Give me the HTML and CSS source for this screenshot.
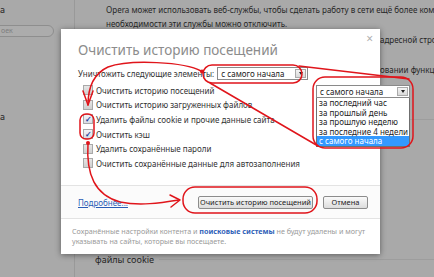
FILE: index.html
```html
<!DOCTYPE html>
<html>
	<head>
		<meta charset="utf-8">
		<link rel="stylesheet" href="styles.css">
		<title>Очистить историю посещений</title>
	</head>
	<body>
		<div class="screen">
			<div class="sidebar">
				<div class="side-top">а</div>
				<div class="search">оек</div>
				<div class="side-item">а</div>
			</div>
			<div class="content">
				<p class="line first">Opera может использовать веб-службы, чтобы сделать работу в сети ещё более комфортной.</p>
				<p class="line">необходимости эти службы можно отключить.</p>
				<p class="line behind">адресной строке</p>
				<p class="line behind second">овании функции</p>
				<div class="rule"></div>
				<div class="section-title"><span>файлы cookie</span><i></i></div>
			</div>
		</div>

		<div class="dialog">
			<div class="dlg-head">
				<span class="dlg-title">Очистить историю посещений</span>
				<span class="dlg-close">×</span>
			</div>
			<div class="dlg-body">
				<div class="range-row">
					<span>Уничтожить следующие элементы:</span>
					<div class="select wide">
						<span class="select-text">с самого начала</span>
						<span class="select-btn"><b></b></span>
					</div>
				</div>
				<ul class="checks">
					<li><span class="cb"></span>Очистить историю посещений</li>
					<li><span class="cb"></span>Очистить историю загруженных файлов</li>
					<li><span class="cb on">✓</span>Удалить файлы cookie и прочие данные сайта</li>
					<li><span class="cb on">✓</span>Очистить кэш</li>
					<li><span class="cb"></span>Удалить сохранённые пароли</li>
					<li><span class="cb"></span>Очистить сохранённые данные для автозаполнения</li>
				</ul>
			</div>
			<div class="dlg-foot">
				<a class="more" href="#">Подробнее...</a>
				<div class="buttons">
					<button class="btn main">Очистить историю посещений</button>
					<button class="btn cancel">Отмена</button>
				</div>
			</div>
			<div class="dlg-note">
				Сохранённые настройки контента и <b>поисковые системы</b> не будут удалены и могут<br>
				указывать на сайты, которые вы посещаете.
			</div>
		</div>

		<div class="popup">
			<div class="select">
				<span class="select-text">с самого начала</span>
				<span class="select-btn"><b></b></span>
			</div>
			<ul class="options">
				<li>за последний час</li>
				<li>за прошлый день</li>
				<li>за прошлую неделю</li>
				<li>за последние 4 недели</li>
				<li class="sel">с самого начала</li>
			</ul>
		</div>

		<!-- red marks drawn over the screenshot -->
		<svg class="marks" width="434" height="277" viewBox="0 0 434 277">
			<g fill="none" stroke="#e0151b" stroke-width="1.5" stroke-linecap="round" stroke-linejoin="round">
				<rect x="203" y="65" width="99" height="18" rx="9"/>
				<rect x="313" y="77" width="100" height="71" rx="12"/>
				<line x1="299" y1="66" x2="409" y2="79"/>
				<line x1="210" y1="83" x2="318" y2="146"/>
				<path d="M201,71 C185,62 130,59 108,67 C95,73 88,86 88,105"/>
				<path d="M83,91 L88,105 L93,91"/>
				<rect x="80" y="114" width="14" height="25" rx="6"/>
				<path d="M88,143 C86,175 95,195 120,202 C140,206 160,203 179,200"/>
				<path d="M170,195 L180,200 L171,207"/>
				<rect x="183" y="187" width="134" height="26" rx="12"/>
			</g>
			<g fill="#e0151b">
				<circle cx="202" cy="71.5" r="2"/>
				<circle cx="88" cy="143" r="2"/>
			</g>
		</svg>
	</body>
</html>
```

FILE: styles.css
```css
body {
	margin: 0;
	width: 434px;
	height: 277px;
	overflow: hidden;
	position: relative;
	background: #a9a9a9;
	font-family: "Noto Sans", sans-serif;
	color: #262626;
}
.screen {
	display: flex;
	height: 277px;
}
.sidebar {
	width: 74px;
	flex: none;
	border-right: 1px solid #999;
	font-size: 9px;
}
.side-top {
	padding-top: 4px;
	line-height: 12px;
}
.search {
	margin-left: -20px;
	margin-top: 9px;
	width: 52px;
	height: 10px;
	padding-left: 20px;
	border: 1px solid #8e8e8e;
	border-radius: 6px;
	background: #acacac;
	color: #7e7e7e;
	font-size: 7px;
	line-height: 10px;
}
.side-item {
	margin-top: 74px;
	line-height: 12px;
}
.content {
	flex: 1;
	min-width: 0;
	overflow: hidden;
	padding-left: 31px;
	font-size: 8px;
}
.line {
	margin: 0;
	line-height: 14px;
	white-space: nowrap;
}
.first {
	margin-top: 3px;
}
.behind {
	padding-left: 274px;
	margin-top: 2px;
}
.second {
	margin-top: 16px;
}
.rule {
	margin-top: 42px;
	margin-left: -31px;
	border-top: 1px solid #9d9d9d;
}
.section-title {
	display: flex;
	align-items: center;
	margin-top: 133px;
	margin-left: -11px;
	font-size: 9px;
}
.section-title i {
	flex: 1;
	margin-left: 5px;
	border-top: 1px solid #9d9d9d;
}

/* dialog */
.dialog {
	position: absolute;
	left: 61px;
	top: 29px;
	width: 319px;
	height: 225px;
	background: #fff;
	box-shadow: 0 1px 6px rgba(0, 0, 0, 0.45);
	font-size: 8px;
	color: #333;
}
.dlg-head {
	display: flex;
	justify-content: space-between;
	padding: 0 7px 0 17px;
	height: 36px;
}
.dlg-title {
	padding-top: 12px;
	font-size: 13.5px;
	color: #8c8c8c;
}
.dlg-close {
	padding-top: 1px;
	font-size: 12px;
	color: #b0b0b0;
}
.dlg-body {
	padding: 0 17px;
	height: 120px;
}
.range-row {
	display: flex;
	align-items: center;
	gap: 3px;
	height: 17px;
}
.select {
	display: flex;
	height: 11px;
	border: 1px solid #8a8a8a;
	background: #fff;
}
.wide {
	width: 89px;
}
.select-text {
	flex: 1;
	padding-left: 3px;
	line-height: 11px;
	color: #222;
}
.select-btn {
	width: 9px;
	margin: 1px;
	border: 1px solid #aaa;
	background: linear-gradient(#f4f4f4, #d8d8d8);
	display: flex;
	align-items: center;
	justify-content: center;
}
.select-btn b {
	border-left: 2.5px solid transparent;
	border-right: 2.5px solid transparent;
	border-top: 3px solid #222;
}
.checks {
	list-style: none;
	margin: 1px 0 0 5px;
	padding: 0;
}
.checks li {
	display: flex;
	align-items: center;
	height: 14.6px;
}
.cb {
	width: 8px;
	height: 8px;
	margin-right: 3px;
	border: 1px solid #a9a9a9;
	background: linear-gradient(#e6e6e6, #cfcfcf);
	font-size: 8px;
	line-height: 8px;
	text-align: center;
	color: #1f3f9a;
	font-weight: bold;
}
.cb.on {
	background: linear-gradient(#f2f4f8, #d8dce6);
}
.dlg-foot {
	display: flex;
	align-items: center;
	justify-content: space-between;
	height: 32px;
	padding: 0 17px;
	border-top: 1px solid #e3e3e3;
	border-bottom: 1px solid #e3e3e3;
	background: #fbfbfb;
}
.more {
	color: #2a5bb5;
	text-decoration: underline;
}
.buttons {
	display: flex;
	gap: 10px;
	margin-right: -5px;
}
.btn {
	height: 13px;
	padding: 0;
	border: 1px solid #8c8c8c;
	border-radius: 2px;
	background: linear-gradient(#fafafa, #dcdcdc);
	font-family: "Noto Sans", sans-serif;
	font-size: 7.5px;
	line-height: 11px;
	color: #222;
	white-space: nowrap;
}
.btn.main {
	width: 115px;
}
.btn.cancel {
	width: 45px;
}
.dlg-note {
	padding: 8px 11px 0;
	line-height: 9.5px;
	color: #9a9a9a;
	font-size: 7.2px;
	white-space: nowrap;
}
.dlg-note b {
	color: #2f5fb8;
	font-weight: bold;
}

/* open dropdown list */
.popup {
	position: absolute;
	left: 316px;
	top: 85px;
	width: 94px;
	font-size: 8px;
}
.options {
	list-style: none;
	margin: 0;
	padding: 0;
	border: 1px solid #6f6f6f;
	border-top: none;
	background: #fff;
}
.options li {
	height: 9.6px;
	line-height: 9.6px;
	padding-left: 2px;
	color: #222;
}
.options li.sel {
	background: #3399ff;
	color: #fff;
}
.marks {
	position: absolute;
	left: 0;
	top: 0;
	pointer-events: none;
}
```
